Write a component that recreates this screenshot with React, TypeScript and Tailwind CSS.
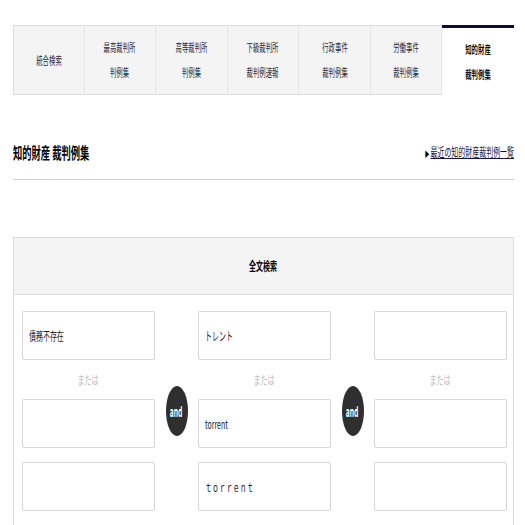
import React from "react";

const tabs = [
  { lines: ["統合検索"] },
  { lines: ["最高裁判所", "判例集"] },
  { lines: ["高等裁判所", "判例集"] },
  { lines: ["下級裁判所", "裁判例速報"] },
  { lines: ["行政事件", "裁判例集"] },
  { lines: ["労働事件", "裁判例集"] },
  { lines: ["知的財産", "裁判例集"], active: true },
];

const font = { fontFamily: '"Noto Sans CJK JP", "Noto Sans", sans-serif' };

function Squeeze({ children, origin = "origin-center", className = "scale-x-[0.58]" }: any) {
  return (
    <span className={`inline-block whitespace-nowrap ${className} ${origin}`}>
      {children}
    </span>
  );
}

function Box({ text, className = "" }: { text?: string; className?: string }) {
  return (
    <div className={`h-[49px] w-[133px] border border-[#d6d6d6] rounded-[2px] bg-white flex items-center pl-[6px] text-[12px] text-[#222] ${className}`}>
      {text && <Squeeze origin="origin-left">{text}</Squeeze>}
    </div>
  );
}

function Column({ values }: { values: string[] }) {
  return (
    <div className="flex flex-col w-[133px]">
      <Box text={values[0]} />
      <div className="h-[39px] flex items-center justify-center text-[12px] text-[#bdbdbd]">
        <Squeeze>または</Squeeze>
      </div>
      <Box text={values[1]} />
      <Box text={values[2]} className="mt-[14px]" />
    </div>
  );
}

function AndBadge() {
  return (
    <div className="w-[43px] flex justify-center pt-[75px]">
      <div className="w-[22px] h-[50px] rounded-[50%] bg-[#2f2f2f] flex items-center justify-center text-white text-[14px] font-bold">
        <Squeeze className="scale-x-[0.48]">and</Squeeze>
      </div>
    </div>
  );
}

export default function App() {
  return (
    <div className="w-[525px] h-[525px] bg-white overflow-hidden" style={font}>
      <div className="ml-[13px] w-[501px] pt-[25px]">
        <div className="grid grid-cols-7 h-[70px]">
          {tabs.map((tab, i) => (
            <div
              key={i}
              className={
                tab.active
                  ? "bg-white border-t-[3px] border-[#0c0c2e] flex flex-col items-center justify-center text-[11px] font-bold text-[#111] leading-[25px]"
                  : "bg-[#f4f4f4] border-t border-b border-[#dcdcdc] border-r border-r-[#e6e6e6] first:border-l flex flex-col items-center justify-center text-[11px] text-[#2a2a3a] leading-[25px]"
              }
            >
              {tab.lines.map((l) => (
                <Squeeze key={l}>{l}</Squeeze>
              ))}
            </div>
          ))}
        </div>

        <div className="flex items-center justify-between mt-[44px] h-[26px]">
          <h1 className="text-[16px] font-bold text-black">
            <Squeeze origin="origin-left">知的財産 裁判例集</Squeeze>
          </h1>
          <a className="text-[12px] text-[#14143c] flex items-center">
            <Squeeze origin="origin-right">
              <span className="text-[8px] text-black mr-[2px]">▶</span>
              <span className="underline">最近の知的財産裁判例一覧</span>
            </Squeeze>
          </a>
        </div>

        <div className="mt-[14px] border-t border-[#cfcfcf]" />

        <div className="mt-[57px] border border-[#dcdcdc]">
          <div className="h-[57px] bg-[#f4f4f4] border-b border-[#dcdcdc] flex items-center justify-center text-[12px] font-bold text-black">
            <Squeeze>全文検索</Squeeze>
          </div>
          <div className="flex pl-[8px] pt-[16px] pb-[20px]">
            <Column values={["債務不存在", "", ""]} />
            <AndBadge />
            <Column values={["トレント", "torrent", "ｔｏｒｒｅｎｔ"]} />
            <AndBadge />
            <Column values={["", "", ""]} />
          </div>
        </div>
      </div>
    </div>
  );
}
